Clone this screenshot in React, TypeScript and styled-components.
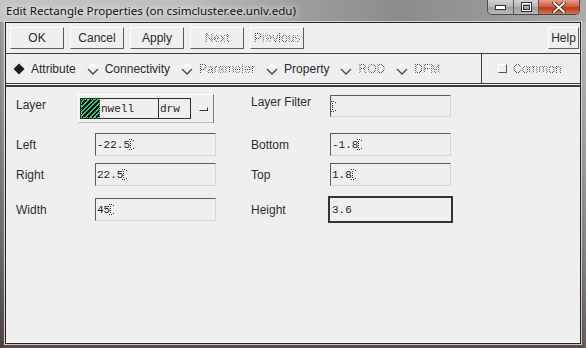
import React from "react";
import styled, { createGlobalStyle, css } from "styled-components";

const GlobalStyle = createGlobalStyle`
  html, body { margin: 0; padding: 0; background: #777; }
  body { width: 586px; height: 348px; overflow: hidden; }
  * { box-sizing: border-box; }
`;

const stipple = css`
  color: transparent;
  background-image: repeating-conic-gradient(#4c4c4c 0% 25%, transparent 0% 50%);
  background-size: 2px 2px;
  -webkit-background-clip: text;
  background-clip: text;
`;

const Window = styled.div`
  width: 586px;
  height: 348px;
  display: flex;
  flex-direction: column;
  background:
    linear-gradient(90deg, rgba(0,0,0,0.18) 0px, rgba(0,0,0,0) 5px, rgba(0,0,0,0) 581px, rgba(255,255,255,0.12) 586px),
    linear-gradient(180deg, #b6b6b6 0px, #9c9c9c 120px, #787878 250px, #5a4a4a 348px);
  font-family: "Liberation Sans", Arial, sans-serif;
`;

const TitleBar = styled.div`
  height: 22px;
  flex: none;
  display: flex;
  align-items: flex-start;
  background: linear-gradient(90deg, #c4c4c4 0%, #bdbdbd 32%, #9c9c9c 52%, #8c8c8c 68%, #979797 83%, #ababab 100%);
`;

const TitleText = styled.div`
  margin: 3px 0 0 6px;
  line-height: 16px;
  font-family: "Noto Sans", "Open Sans", sans-serif;
  font-size: 11.6px;
  color: #111;
  white-space: nowrap;
  text-shadow: 0 0 5px rgba(255,255,255,0.95), 0 0 10px rgba(255,255,255,0.8);
`;

const Controls = styled.div`
  margin-left: auto;
  margin-right: 6px;
  display: flex;
  height: 15px;
  border: 1px solid #4a4a4a;
  border-top: none;
  border-radius: 0 0 5px 5px;
  overflow: hidden;
`;

const CtrlButton = styled.div<{ $w: number; $close?: boolean }>`
  width: ${(p) => p.$w}px;
  height: 100%;
  display: flex;
  align-items: center;
  justify-content: center;
  background: ${(p) =>
    p.$close
      ? "linear-gradient(180deg, #e4a08e 0%, #d2603f 45%, #bb3a20 55%, #d8704f 100%)"
      : "linear-gradient(180deg, #d4d4d4 0%, #b8b8b8 45%, #a0a0a0 55%, #b8b8b8 100%)"};
  & + & {
    border-left: 1px solid #5a5a5a;
  }
`;

const Frame = styled.div`
  flex: 1;
  display: flex;
  padding: 0 5px 4px 5px;
`;

const Dialog = styled.div`
  flex: 1;
  display: flex;
  flex-direction: column;
  background: #efefef;
  border: 1px solid #232323;
  box-shadow: 0 0 0 1px rgba(225, 225, 225, 0.85);
`;

const ButtonBar = styled.div`
  height: 31px;
  flex: none;
  display: flex;
  align-items: flex-start;
  gap: 6px;
  padding: 4px 1px 0 4px;
  border-bottom: 1px solid #3c3c3c;
`;

const Button = styled.div<{ $w: number; $push?: boolean }>`
  width: ${(p) => p.$w}px;
  height: 22px;
  margin-left: ${(p) => (p.$push ? "auto" : "0")};
  display: flex;
  align-items: center;
  justify-content: center;
  background: #efefef;
  border-top: 1px solid #ffffff;
  border-left: 1px solid #ffffff;
  border-right: 1px solid #5d5d5d;
  border-bottom: 1px solid #5d5d5d;
  font-size: 12px;
  color: #2a2a2a;
`;

const Label = styled.span<{ $disabled?: boolean }>`
  white-space: nowrap;
  ${(p) => p.$disabled && stipple}
`;

const TabBar = styled.div`
  height: 30px;
  flex: none;
  display: flex;
  border-bottom: 1px solid #3c3c3c;
`;

const TabList = styled.div`
  flex: 1;
  display: flex;
  align-items: center;
  padding-left: 7px;
`;

const Tab = styled.div`
  display: flex;
  align-items: center;
  gap: 6px;
  margin-right: 11px;
  font-size: 12px;
  color: #2a2a2a;
`;

const CommonCell = styled.div`
  width: 99px;
  flex: none;
  display: flex;
  align-items: center;
  gap: 6px;
  padding-left: 16px;
  border-left: 1px solid #3c3c3c;
  font-size: 12px;
`;

const CheckBox = styled.span`
  width: 9px;
  height: 9px;
  border-top: 1px solid #ffffff;
  border-left: 1px solid #ffffff;
  border-right: 1px solid #555;
  border-bottom: 1px solid #555;
`;

const FormPanel = styled.div`
  flex: 1;
  margin-top: 1px;
  border-top: 2px solid #3c3c3c;
  border-bottom: 1px solid #ffffff;
  padding: 7px 0 0 10px;
`;

const FormRow = styled.div<{ $h: number; $mt: number }>`
  display: grid;
  grid-template-columns: 62px 17px 121px 35px 79px 121px;
  grid-template-rows: ${(p) => p.$h}px;
  height: ${(p) => p.$h}px;
  margin-top: ${(p) => p.$mt}px;
  align-items: center;
`;

const FieldLabel = styled.div<{ $col: string; $top?: number }>`
  grid-row: 1;
  grid-column: ${(p) => p.$col};
  font-size: 12px;
  line-height: 14px;
  color: #2e2e2e;
  white-space: nowrap;
  ${(p) =>
    p.$top !== undefined &&
    css`
      align-self: start;
      margin-top: ${p.$top}px;
    `}
`;

const Input = styled.div<{ $col: number; $focused?: boolean; $h?: number; $top?: number }>`
  grid-row: 1;
  grid-column: ${(p) => p.$col};
  width: ${(p) => (p.$focused ? 125 : 121)}px;
  height: ${(p) => (p.$focused ? 27 : p.$h ?? 23)}px;
  display: flex;
  align-items: center;
  padding-left: ${(p) => (p.$focused ? 2 : 1)}px;
  font-family: "Liberation Mono", "DejaVu Sans Mono", monospace;
  font-size: 11px;
  color: #1e1e1e;
  ${(p) =>
    p.$focused
      ? css`
          margin: -2px;
          border: 2px solid #333;
        `
      : css`
          border-top: 1px solid #5c5c5c;
          border-left: 1px solid #5c5c5c;
          border-right: 1px solid #d6d6d6;
          border-bottom: 1px solid #d6d6d6;
        `}
  ${(p) =>
    p.$top !== undefined &&
    css`
      align-self: start;
      margin-top: ${p.$top}px;
    `}
`;

const LayerBox = styled.div`
  grid-row: 1;
  grid-column: 2 / 4;
  width: 136px;
  height: 29px;
  display: flex;
  align-items: center;
  padding-left: 1px;
  border-top: 1px solid #ffffff;
  border-left: 1px solid #ffffff;
  border-right: 1px solid #7a7a7a;
  border-bottom: 1px solid #bdbdbd;
`;

const Combo = styled.div`
  width: 111px;
  height: 21px;
  display: flex;
  border: 1px solid #2e2e2e;
  font-family: "Liberation Mono", "DejaVu Sans Mono", monospace;
  font-size: 11px;
  color: #1e1e1e;
`;

const Swatch = styled.div`
  width: 19px;
  flex: none;
  border-right: 1px solid #2e2e2e;
  outline: 1px dotted #22d38a;
  outline-offset: -1px;
  background: repeating-linear-gradient(135deg, #000 0px, #000 2px, #1fcf86 2px, #1fcf86 3.3px);
`;

const ComboCell = styled.div<{ $w: number; $last?: boolean }>`
  width: ${(p) => p.$w}px;
  flex: none;
  display: flex;
  align-items: center;
  padding-left: 1px;
  border-right: ${(p) => (p.$last ? "none" : "1px solid #2e2e2e")};
`;

const Indicator = styled.span`
  margin-left: 8px;
  width: 9px;
  height: 4px;
  border-top: 1px solid #ffffff;
  border-left: 1px solid #ffffff;
  border-right: 1px solid #333;
  border-bottom: 1px solid #333;
`;

const CursorSvg = styled.svg`
  flex: none;
  margin-left: -1px;
`;

function TextCursor() {
  const dots: [number, number][] = [
    [0, 0], [2, 0], [4, 1],
    [1, 2], [1, 4], [1, 6], [1, 8],
    [0, 10], [2, 10], [4, 9],
  ];
  return (
    <CursorSvg width="5" height="11" viewBox="0 0 5 11">
      {dots.map(([x, y]) => (
        <rect key={`${x}-${y}`} x={x} y={y} width="1" height="1" fill="#3a3a3a" />
      ))}
    </CursorSvg>
  );
}

function Diamond({ filled }: { filled?: boolean }) {
  return (
    <svg width="12" height="12" viewBox="0 0 12 12">
      {filled ? (
        <polygon points="6,0.5 11.5,6 6,11.5 0.5,6" fill="#1e1e1e" />
      ) : (
        <>
          <polyline points="1,6 6,1 11,6" fill="none" stroke="#ffffff" strokeWidth="1.3" />
          <polyline points="1,6 6,11 11,6" fill="none" stroke="#444" strokeWidth="1.3" />
        </>
      )}
    </svg>
  );
}

const tabs: { label: string; disabled?: boolean; filled?: boolean }[] = [
  { label: "Attribute", filled: true },
  { label: "Connectivity" },
  { label: "Parameter", disabled: true },
  { label: "Property" },
  { label: "ROD", disabled: true },
  { label: "DFM", disabled: true },
];

const buttons: { label: string; disabled?: boolean }[] = [
  { label: "OK" },
  { label: "Cancel" },
  { label: "Apply" },
  { label: "Next", disabled: true },
  { label: "Previous", disabled: true },
];

export default function App() {
  return (
    <>
      <GlobalStyle />
      <Window>
        <TitleBar>
          <TitleText>Edit Rectangle Properties (on csimcluster.ee.unlv.edu)</TitleText>
          <Controls>
            <CtrlButton $w={25}>
              <svg width="11" height="6" viewBox="0 0 11 6">
                <rect x="0.5" y="1.5" width="10" height="4" fill="#fff" stroke="#333" />
              </svg>
            </CtrlButton>
            <CtrlButton $w={25}>
              <svg width="11" height="10" viewBox="0 0 11 10">
                <rect x="0.5" y="0.5" width="10" height="9" fill="none" stroke="#333" />
                <rect x="1.5" y="1.5" width="8" height="7" fill="none" stroke="#fff" />
                <rect x="2.5" y="3.5" width="6" height="4" fill="none" stroke="#333" />
              </svg>
            </CtrlButton>
            <CtrlButton $w={41} $close>
              <svg width="14" height="11" viewBox="0 0 14 11">
                <path d="M2 1 L12 10 M12 1 L2 10" stroke="#3a2a2a" strokeWidth="3.6" strokeLinecap="square" />
                <path d="M2 1 L12 10 M12 1 L2 10" stroke="#fff" strokeWidth="1.8" strokeLinecap="square" />
              </svg>
            </CtrlButton>
          </Controls>
        </TitleBar>
        <Frame>
          <Dialog>
            <ButtonBar>
              {buttons.map((b) => (
                <Button key={b.label} $w={54}>
                  <Label $disabled={b.disabled}>{b.label}</Label>
                </Button>
              ))}
              <Button $w={31} $push>
                <Label>Help</Label>
              </Button>
            </ButtonBar>
            <TabBar>
              <TabList>
                {tabs.map((t) => (
                  <Tab key={t.label}>
                    <Diamond filled={t.filled} />
                    <Label $disabled={t.disabled}>{t.label}</Label>
                  </Tab>
                ))}
              </TabList>
              <CommonCell>
                <CheckBox />
                <Label $disabled>Common</Label>
              </CommonCell>
            </TabBar>
            <FormPanel>
              <FormRow $h={29} $mt={0}>
                <FieldLabel $col="1" $top={4}>Layer</FieldLabel>
                <LayerBox>
                  <Combo>
                    <Swatch />
                    <ComboCell $w={59}>nwell</ComboCell>
                    <ComboCell $w={29} $last>drw</ComboCell>
                  </Combo>
                  <Indicator />
                </LayerBox>
                <FieldLabel $col="5" $top={1}>Layer Filter</FieldLabel>
                <Input $col={6} $h={22} $top={1}>
                  <TextCursor />
                </Input>
              </FormRow>
              <FormRow $h={23} $mt={10}>
                <FieldLabel $col="1 / 3">Left</FieldLabel>
                <Input $col={3}>-22.5<TextCursor /></Input>
                <FieldLabel $col="5">Bottom</FieldLabel>
                <Input $col={6}>-1.8<TextCursor /></Input>
              </FormRow>
              <FormRow $h={23} $mt={7}>
                <FieldLabel $col="1 / 3">Right</FieldLabel>
                <Input $col={3}>22.5<TextCursor /></Input>
                <FieldLabel $col="5">Top</FieldLabel>
                <Input $col={6}>1.8<TextCursor /></Input>
              </FormRow>
              <FormRow $h={23} $mt={12}>
                <FieldLabel $col="1 / 3">Width</FieldLabel>
                <Input $col={3}>45<TextCursor /></Input>
                <FieldLabel $col="5">Height</FieldLabel>
                <Input $col={6} $focused>3.6</Input>
              </FormRow>
            </FormPanel>
          </Dialog>
        </Frame>
      </Window>
    </>
  );
}
